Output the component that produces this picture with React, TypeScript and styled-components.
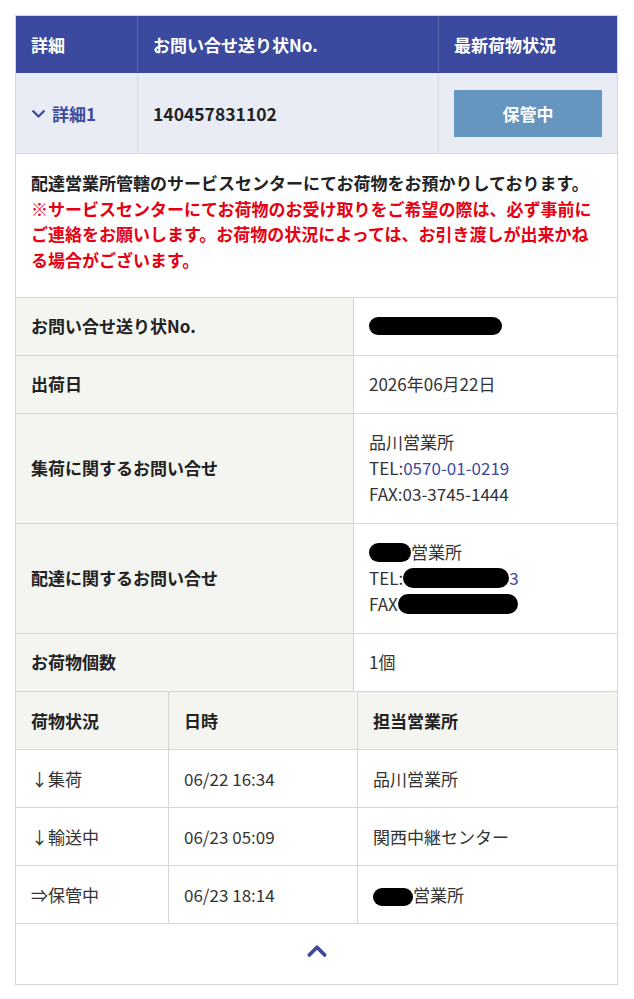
import * as React from 'react'
import styled, { createGlobalStyle } from 'styled-components'

const GlobalStyle = createGlobalStyle`
    body {
        margin: 0;
        background: #ffffff;
        font-family: "Noto Sans CJK JP", "Noto Sans", sans-serif;
        color: #333333;
    }
`

const StyledPage = styled.div`
    padding: 15px 16px 16px 15px;
`

const StyledCard = styled.div`
    width: 603px;
    border: 1px solid #d6d6d6;
    box-sizing: border-box;
`

const StyledSummaryRow = styled.div<{ $head?: boolean }>`
    display: grid;
    grid-template-columns: 121px 301px 1fr;
    height: ${(p) => (p.$head ? '56px' : '80px')};
    background: ${(p) => (p.$head ? '#3b499e' : '#e9ecf4')};
    color: ${(p) => (p.$head ? '#ffffff' : '#222222')};
    border-bottom: 1px solid ${(p) => (p.$head ? '#3b499e' : '#d6d9e2')};
    font-weight: 700;
    font-size: 17px;
`

const StyledSummaryCell = styled.div<{ $head?: boolean }>`
    display: flex;
    align-items: center;
    padding: 0 15px;
    border-left: 1px solid ${(p) => (p.$head ? '#5563ab' : '#d6d9e2')};
    &:first-child {
        border-left: none;
    }
`

const StyledTrackingNo = styled.span`
    font-size: 17.5px;
`

const StyledDetailToggle = styled.span`
    display: flex;
    align-items: center;
    gap: 6px;
    color: #3b499e;
    font-size: 17px;
`

const StyledStatusBadge = styled.div`
    width: 100%;
    height: 47px;
    display: flex;
    align-items: center;
    justify-content: center;
    background: #6695bf;
    color: #ffffff;
    font-size: 17px;
    font-weight: 700;
`

const StyledMessage = styled.div`
    padding: 16px 0 25px 15px;
    font-size: 17px;
    font-weight: 700;
    line-height: 25.5px;
    border-bottom: 1px solid #d6d6d6;
    color: #222222;
    white-space: nowrap;
`

const StyledNotice = styled.div`
    color: #e60012;
`

const StyledInfoRow = styled.div`
    display: grid;
    grid-template-columns: 337px 1fr;
    border-bottom: 1px solid #d6d6d6;
`

const StyledLabel = styled.div`
    display: flex;
    align-items: center;
    background: #f4f4f1;
    padding: 15px 15px 16px;
    font-size: 17px;
    font-weight: 700;
    line-height: 26px;
    color: #222222;
`

const StyledValue = styled.div`
    display: flex;
    flex-direction: column;
    justify-content: center;
    padding: 15px 15px 16px;
    border-left: 1px solid #d6d6d6;
    font-size: 17px;
    line-height: 26px;
    color: #333333;
`

const StyledLine = styled.div`
    height: 26px;
    white-space: nowrap;
`

const StyledLink = styled.span`
    color: #3b499e;
`

const StyledRedaction = styled.span<{ $w: number; $h?: number }>`
    display: inline-block;
    vertical-align: top;
    margin-top: ${(p) => (26 - (p.$h ?? 18)) / 2}px;
    width: ${(p) => p.$w}px;
    height: ${(p) => p.$h ?? 18}px;
    border-radius: ${(p) => (p.$h ?? 18) / 2}px;
    background: #000000;
`

const StyledHistoryRow = styled.div<{ $head?: boolean }>`
    display: grid;
    grid-template-columns: 152px 189px 1fr;
    height: 57px;
    border-bottom: 1px solid #d6d6d6;
    background: ${(p) => (p.$head ? '#f4f4f1' : '#ffffff')};
    font-weight: ${(p) => (p.$head ? 700 : 400)};
    color: ${(p) => (p.$head ? '#222222' : '#333333')};
    font-size: 17px;
    line-height: 26px;
`

const StyledHistoryCell = styled.div`
    display: flex;
    align-items: center;
    padding: 0 15px;
    border-left: 1px solid #d6d6d6;
    &:first-child {
        border-left: none;
    }
`

const StyledFooter = styled.div`
    height: 60px;
    display: flex;
    align-items: center;
    justify-content: center;
    padding-bottom: 6px;
    box-sizing: border-box;
`

const Chevron = ({ up, size }: { up?: boolean; size: number }) => (
    <svg width={size} height={size * 0.6} viewBox="0 0 20 12" fill="none">
        <path
            d={up ? 'M3 10 L10 3 L17 10' : 'M3 3 L10 10 L17 3'}
            stroke="#3b499e"
            strokeWidth={up ? 3.4 : 3}
            strokeLinecap="round"
            strokeLinejoin="round"
        />
    </svg>
)

const noticeLines = [
    '※サービスセンターにてお荷物のお受け取りをご希望の際は、必ず事前に',
    'ご連絡をお願いします。お荷物の状況によっては、お引き渡しが出来かね',
    'る場合がございます。',
]

const history = [
    { status: '↓集荷', date: '06/22 16:34', office: '品川営業所', hidden: false },
    { status: '↓輸送中', date: '06/23 05:09', office: '関西中継センター', hidden: false },
    { status: '⇒保管中', date: '06/23 18:14', office: '営業所', hidden: true },
]

const App = () => {
    return (
        <StyledPage>
            <GlobalStyle />
            <StyledCard>
                <StyledSummaryRow $head>
                    <StyledSummaryCell $head>詳細</StyledSummaryCell>
                    <StyledSummaryCell $head>お問い合せ送り状No.</StyledSummaryCell>
                    <StyledSummaryCell $head>最新荷物状況</StyledSummaryCell>
                </StyledSummaryRow>
                <StyledSummaryRow>
                    <StyledSummaryCell>
                        <StyledDetailToggle>
                            <Chevron size={15} />
                            詳細1
                        </StyledDetailToggle>
                    </StyledSummaryCell>
                    <StyledSummaryCell>
                        <StyledTrackingNo>140457831102</StyledTrackingNo>
                    </StyledSummaryCell>
                    <StyledSummaryCell>
                        <StyledStatusBadge>保管中</StyledStatusBadge>
                    </StyledSummaryCell>
                </StyledSummaryRow>

                <StyledMessage>
                    <div>配達営業所管轄のサービスセンターにてお荷物をお預かりしております。</div>
                    <StyledNotice>
                        {noticeLines.map((line) => (
                            <div key={line}>{line}</div>
                        ))}
                    </StyledNotice>
                </StyledMessage>

                <StyledInfoRow>
                    <StyledLabel>お問い合せ送り状No.</StyledLabel>
                    <StyledValue>
                        <StyledLine>
                            <StyledRedaction $w={133} />
                        </StyledLine>
                    </StyledValue>
                </StyledInfoRow>
                <StyledInfoRow>
                    <StyledLabel>出荷日</StyledLabel>
                    <StyledValue>
                        <StyledLine>2026年06月22日</StyledLine>
                    </StyledValue>
                </StyledInfoRow>
                <StyledInfoRow>
                    <StyledLabel>集荷に関するお問い合せ</StyledLabel>
                    <StyledValue>
                        <StyledLine>品川営業所</StyledLine>
                        <StyledLine>
                            TEL:<StyledLink>0570-01-0219</StyledLink>
                        </StyledLine>
                        <StyledLine>FAX:03-3745-1444</StyledLine>
                    </StyledValue>
                </StyledInfoRow>
                <StyledInfoRow>
                    <StyledLabel>配達に関するお問い合せ</StyledLabel>
                    <StyledValue>
                        <StyledLine>
                            <StyledRedaction $w={42} $h={19} />
                            営業所
                        </StyledLine>
                        <StyledLine>
                            TEL:
                            <StyledRedaction $w={106} $h={20} />
                            <StyledLink>3</StyledLink>
                        </StyledLine>
                        <StyledLine>
                            FAX
                            <StyledRedaction $w={120} $h={20} />
                        </StyledLine>
                    </StyledValue>
                </StyledInfoRow>
                <StyledInfoRow>
                    <StyledLabel>お荷物個数</StyledLabel>
                    <StyledValue>
                        <StyledLine>1個</StyledLine>
                    </StyledValue>
                </StyledInfoRow>

                <StyledHistoryRow $head>
                    <StyledHistoryCell>荷物状況</StyledHistoryCell>
                    <StyledHistoryCell>日時</StyledHistoryCell>
                    <StyledHistoryCell>担当営業所</StyledHistoryCell>
                </StyledHistoryRow>
                {history.map((row) => (
                    <StyledHistoryRow key={row.date}>
                        <StyledHistoryCell>{row.status}</StyledHistoryCell>
                        <StyledHistoryCell>{row.date}</StyledHistoryCell>
                        <StyledHistoryCell>
                            {row.hidden && <StyledRedaction $w={40} $h={18} />}
                            {row.office}
                        </StyledHistoryCell>
                    </StyledHistoryRow>
                ))}

                <StyledFooter>
                    <Chevron up size={22} />
                </StyledFooter>
            </StyledCard>
        </StyledPage>
    )
}

export default App
